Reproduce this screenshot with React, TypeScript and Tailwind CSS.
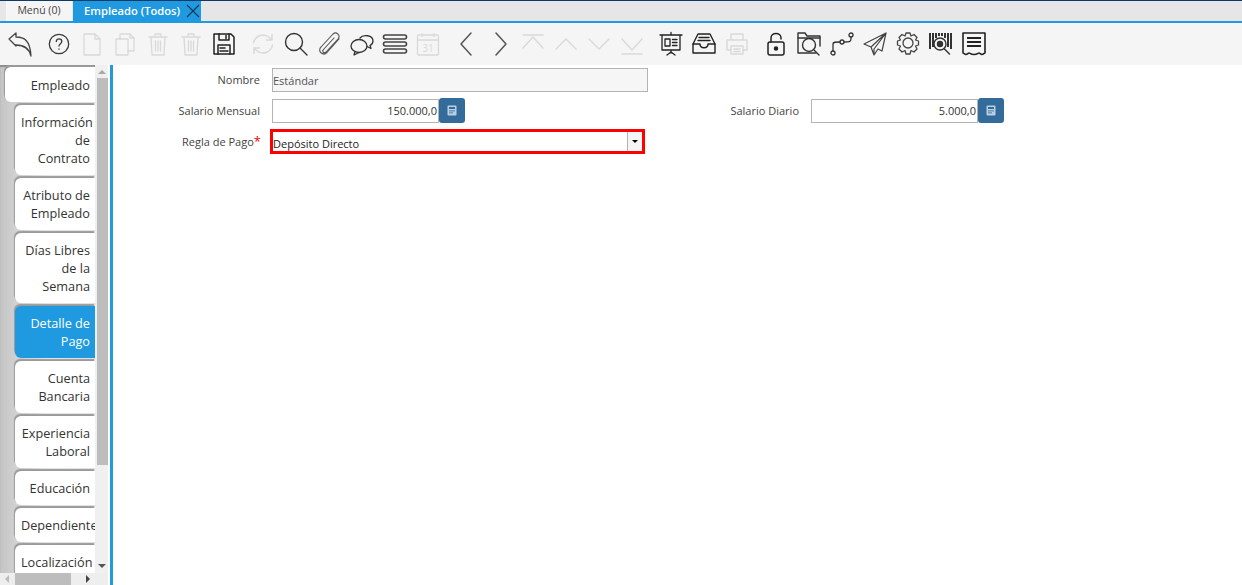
import React from "react";

const D = "#3a3a3a";
const L = "#d9d9d9";

function Ico({ c = D, w = 1.3, children, s = 26 }: { c?: string; w?: number; children: React.ReactNode; s?: number }) {
  return (
    <svg width={s} height={s} viewBox="0 0 26 26" fill="none" stroke={c} strokeWidth={w} strokeLinecap="round" strokeLinejoin="round">
      {children}
    </svg>
  );
}

const tools: { ml?: boolean; el: React.ReactNode }[] = [
  { el: <Ico c="#444" w={1.3}><path d="M2 8l7-6v4c8 0 14 3 15 19-2-8-7-11-15-11v1L2 8z" /></Ico> },
  { ml: true, el: <Ico><circle cx="13" cy="13" r="9.700" /><path d="M10.300 10.500c0-3.400 5.500-3.400 5.500 0 0 2.200-2.800 2.200-2.800 4.600" /><path d="M13 17.800v.4" /></Ico> },
  { el: <Ico c={L}><path d="M5 3h11l5 5v16H5z" /><path d="M16 3v5h5" /></Ico> },
  { el: <Ico c={L}><path d="M4 8h12v16H4z" /><path d="M8 8V3h10l4 4v13h-6" /><path d="M18 3v4h4" /></Ico> },
  { el: <Ico c={L}><path d="M4 6h18M10 6V3h6v3M6 6l1 18h12l1-18M10.500 10v10M13 10v10M15.500 10v10" /></Ico> },
  { el: <Ico c={L}><path d="M4 6h18M10 6V3h6v3M6 6l1 18h12l1-18M10.500 10v10M13 10v10M15.500 10v10" /></Ico> },
  { el: <Ico c="#222" w={1.5}><path d="M3 3h17l3 3v17H3z" /><path d="M8 3v6h10V3M15 4.500v3" /><path d="M7 23v-9h12v9" /><path d="M9 17h5M9 20h8" /></Ico> },
  { ml: true, el: <Ico c={L} w={1.4}><path d="M3.500 12C4.500 5.500 13 1 19.500 6.500L22 9M22 3.500V9h-5.500" /><path d="M22.500 14C21.500 20.500 13 25 6.500 19.500L4 17M4 22.500V17h5.500" /></Ico> },
  { el: <Ico c="#333" w={1.4}><circle cx="11" cy="11" r="8.500" /><path d="M17 17l7 7" /></Ico> },
  { el: <Ico c="#555" w={1.1}><path d="M23 8L11 21.500c-4 4-10-1.500-6-5.500L17 3c3.500-3 8 1.500 5 5L10 21c-2 2-4.500-.5-2.500-2.500L18 7" /></Ico> },
  { el: <Ico c="#333" w={1.3}><ellipse cx="10" cy="15" rx="8" ry="6.500" /><path d="M6 20.500l-1 3.500 5-2.500" /><path d="M11 7c3-4 13-3 13 3 0 2-1 3.500-3 4.500l1 3-4-2" /></Ico> },
  { el: <Ico c="#444" w={1.6}><rect x="1.500" y="4" width="23" height="4" rx="2" /><rect x="1.500" y="11" width="23" height="4" rx="2" /><rect x="1.500" y="18" width="23" height="4" rx="2" /></Ico> },
  { el: <svg width="26" height="26" viewBox="0 0 26 26" fill="none" stroke={L} strokeWidth="1.300"><rect x="2.500" y="4" width="21" height="20" rx="1" /><path d="M2.500 9h21M7 2v4M19 2v4" /><text x="13" y="21" fontSize="10" textAnchor="middle" fill={L} stroke="none" fontFamily="'Open Sans', sans-serif">31</text></svg> },
  { ml: true, el: <Ico c="#555" w={1.5}><path d="M17 2L7 13l10 11" /></Ico> },
  { el: <Ico c="#555" w={1.5}><path d="M9 2l10 11L9 24" /></Ico> },
  { el: <Ico c={L} w={1.4}><path d="M3 4h20M3 17L13 6l10 11" /></Ico> },
  { el: <Ico c={L} w={1.4}><path d="M3 18L13 8l10 10" /></Ico> },
  { el: <Ico c={L} w={1.4}><path d="M3 8l10 10L23 8" /></Ico> },
  { el: <Ico c={L} w={1.4}><path d="M3 8l10 11L23 8M3 23h20" /></Ico> },
  { ml: true, el: <Ico c="#222" w={1.3}><path d="M2 4h22M4 4v15h18V4M13 1.500V4M13 19v3M9 24l4-3 4 3" /><rect x="7" y="8" width="5" height="7" /><path d="M14.500 8.500H19M14.500 11.500H19M14.500 14.500H19" /></Ico> },
  { el: <Ico c="#222" w={1.4}><path d="M7 3h12l5 10v9H2v-9z" /><path d="M2 13h7c0 5 8 5 8 0h7" /><path d="M8 6.500h10M7 9.500h12" /></Ico> },
  { el: <Ico c={L} w={1.4}><path d="M7 9V3h12v6M7 19H3V9h20v10h-4" /><path d="M7 15h12v8H7z" /><path d="M10 18h6M10 20.500h6" /></Ico> },
  { ml: true, el: <Ico c="#222" w={1.5}><rect x="5" y="11" width="16" height="13" rx="2" /><path d="M8 11V7c0-6 10-6 10 0v1" /><circle cx="13" cy="17.500" r="1.500" fill="#222" /></Ico> },
  { el: <Ico c="#333" w={1.4}><path d="M20 22H2V2h7l2 3h13v10" /><path d="M2 7h22" /><circle cx="13" cy="14" r="6.500" /><path d="M18 19l5 5" /></Ico> },
  { el: <Ico c="#333" w={1.3}><circle cx="4" cy="22" r="2" /><circle cx="13" cy="11" r="2" /><circle cx="22" cy="4" r="2" /><path d="M4 20v-7c0-2 2-2 7-2M15 11c5 0 7 0 7-3V6" /></Ico> },
  { el: <Ico c="#444" w={1.2}><path d="M24 2L2 13l7 3 3 8 4-6 4 2zM24 2L9 16M24 2L12 18v6" /></Ico> },
  { el: <Ico c="#444" w={1.3}><path d="M11 2h4l1 3 3-1.500 3 3L20.500 9l3 1v4l-3 1 1.500 3-3 3-3-1.500-1 3.500h-4l-1-3.500L7 21l-3-3 1.500-3-3-1v-4l3-1L4 6.500l3-3L10 5z" /><circle cx="13" cy="12" r="5" /></Ico> },
  { el: <Ico c="#333" w={1.4}><path d="M2 2v16M5 2v14M8 2v5M11 2v3M14 2v3M17 2v5M20 2v14M23 2v16" strokeWidth="2" strokeLinecap="butt" /><circle cx="12" cy="13" r="6" fill="#f5f5f5" /><circle cx="12" cy="13" r="2.500" fill="#333" /><path d="M16.500 18l5 5" /></Ico> },
  { el: <Ico c="#222" w={1.6}><path d="M2 2h22v20c-1 0-1.500 1.500-3 1.500S19 22 18 22s-1.500 1.500-5 1.500S9 22 8 22s-1.500 1.500-3 1.500S3 22 2 22z" /><path d="M6 7h14M6 11h14M6 15h14" strokeWidth="2.200" strokeLinecap="butt" /></Ico> },
];

const tabs: { lines: string[]; h: string; active?: boolean; first?: boolean }[] = [
  { lines: ["Empleado"], h: "h-[35px]", first: true },
  { lines: ["Información", "de", "Contrato"], h: "h-[70px]" },
  { lines: ["Atributo de", "Empleado"], h: "h-[52px]" },
  { lines: ["Días Libres", "de la", "Semana"], h: "h-[70px]" },
  { lines: ["Detalle de", "Pago"], h: "h-[52px]", active: true },
  { lines: ["Cuenta", "Bancaria"], h: "h-[52px]" },
  { lines: ["Experiencia", "Laboral"], h: "h-[52px]" },
  { lines: ["Educación"], h: "h-[34px]" },
  { lines: ["Dependiente"], h: "h-[34px]" },
  { lines: ["Localización"], h: "h-[34px]" },
];

function Calc() {
  return (
    <div className="flex h-[25px] w-[26px] items-center justify-center rounded-[3px] bg-[#336b9b]">
      <svg width="10" height="11" viewBox="0 0 10 11">
        <rect x="0.500" y="0.500" width="9" height="10" rx="1" fill="#b9cfe2" />
        <rect x="2" y="2" width="6" height="2" fill="#336b9b" />
        <rect x="2" y="5.500" width="6" height="0.800" fill="#336b9b" />
        <rect x="2" y="7.500" width="4" height="0.800" fill="#336b9b" />
      </svg>
    </div>
  );
}

export default function App() {
  return (
    <div className="flex h-[585px] w-[1242px] flex-col overflow-hidden bg-white font-['Open_Sans','Noto_Sans',sans-serif] text-[11px] text-[#333]">
      {/* Tabs */}
      <div className="flex h-[23px] shrink-0 items-end border-t border-t-[#0d3a66] border-b-2 border-b-[#1f9ae0] bg-[#e6e6e6] pl-[6px]">
        <div className="flex h-[20px] w-[66px] items-center justify-center bg-[#f5f5f5] text-[10.5px] text-[#444]">Menú (0)</div>
        <div className="ml-px flex h-[20px] w-[128px] items-center whitespace-nowrap bg-[#1f9ae0] pl-[11px] text-[11.2px] font-semibold text-white">
          <span>Empleado (Todos)</span>
          <svg className="ml-auto mr-[1px]" width="14" height="14" viewBox="0 0 14 14" stroke="#12354f" strokeWidth="1.100" fill="none"><path d="M1 1l12 12M13 1L1 13" /></svg>
        </div>
      </div>

      {/* Toolbar */}
      <div className="flex h-[42px] shrink-0 items-center bg-[#f5f5f5] pl-[3px]">
        {tools.map((t, i) => (
          <div key={i} className={`flex w-[33px] shrink-0 justify-center ${t.ml ? "ml-[6px]" : ""}`}>
            {t.el}
          </div>
        ))}
      </div>

      <div className="flex min-h-0 flex-1">
        {/* Side panel */}
        <div className="flex w-[110px] shrink-0 flex-col">
          <div className="flex min-h-0 flex-1">
            <div className="flex w-[95px] flex-col gap-[3px] overflow-hidden bg-gradient-to-r from-[#c4c4c4] via-[#ececec] to-[#e8e8e8] pt-[2px] shadow-[inset_0_2px_1px_#8c8c8c]">
              {tabs.map((t) => (
                <div
                  key={t.lines[0]}
                  className={`${t.h} ${t.first ? "ml-[5px] w-[90px]" : "ml-[15px] w-[80px]"} flex shrink-0 flex-col justify-center rounded-l-[6px] pr-[5px] pl-[6px] text-right text-[12.7px] leading-[18px] whitespace-nowrap shadow-[-1px_-2px_1px_#9a9a9a] ${t.active ? "bg-[#1f9ae0] font-medium text-white" : "bg-white text-[#333]"}`}
                >
                  {t.lines.map((l) => (
                    <div key={l}>{l}</div>
                  ))}
                </div>
              ))}
            </div>
            <div className="flex w-[13px] flex-col items-center bg-[#f0f0f0]">
              <div className="mt-[5px] h-0 w-0 border-x-[4px] border-b-[4px] border-x-transparent border-b-[#a8a8a8]" />
              <div className="mt-[4px] ml-[2px] h-[387px] w-[11px] bg-[#bdbdbd]" />
              <div className="mt-auto mb-[5px] h-0 w-0 border-x-[4px] border-t-[4px] border-x-transparent border-t-[#555]" />
            </div>
            <div className="w-[2px] bg-white" />
          </div>
          <div className="flex h-[12px] w-[108px] shrink-0 items-center bg-[#eeeeee]">
            <div className="ml-[5px] h-0 w-0 border-y-[4px] border-r-[4px] border-y-transparent border-r-[#bbb]" />
            <div className="ml-[6px] h-full w-[56px] bg-[#bdbdbd]" />
            <div className="ml-[15px] h-0 w-0 border-y-[4px] border-l-[4px] border-y-transparent border-l-[#444]" />
          </div>
        </div>
        <div className="w-[3px] shrink-0 bg-[#1f9ae0]" />

        {/* Form */}
        <div className="min-w-0 flex-1 pt-[3px]">
          <div className="flex h-[24px] items-center">
            <div className="w-[147px] pt-[1px] text-right text-[#444]">Nombre</div>
            <div className="ml-[12px] flex h-[24px] w-[376px] items-center border border-[#b4b4b4] bg-[#f6f6f6] pt-[2px] text-[#555]">Estándar</div>
          </div>
          <div className="mt-[6px] flex h-[25px] items-center">
            <div className="w-[147px] pt-[2px] text-right text-[#444]">Salario Mensual</div>
            <div className="ml-[12px] flex h-[24px] w-[167px] items-center justify-end border border-[#b4b4b4] bg-white pt-[2px] pr-[1px] text-[#333]">150.000,0</div>
            <Calc />
            <div className="w-[334px] pt-[2px] text-right text-[#444]">Salario Diario</div>
            <div className="ml-[12px] flex h-[24px] w-[167px] items-center justify-end border border-[#b4b4b4] bg-white pt-[2px] pr-[1px] text-[#333]">5.000,0</div>
            <Calc />
          </div>
          <div className="mt-[5px] flex h-[26px] items-center">
            <div className="w-[148px] pt-[2px] text-right text-[#444]">
              Regla de Pago<span className="text-[13px] leading-none text-[#f00000]">*</span>
            </div>
            <div className="ml-[9px] flex h-[25px] w-[375px] items-center border-[3px] border-[#ff0000] bg-white">
              <div className="flex-1 pt-[5px] leading-[14px] text-[#222]">Depósito Directo</div>
              <div className="flex h-full w-[15px] items-center justify-center border-l border-[#b4b4b4] bg-[#f5f5f5]">
                <div className="h-0 w-0 border-x-[3px] border-t-[3px] border-x-transparent border-t-black" />
              </div>
            </div>
          </div>
        </div>
      </div>
    </div>
  );
}
